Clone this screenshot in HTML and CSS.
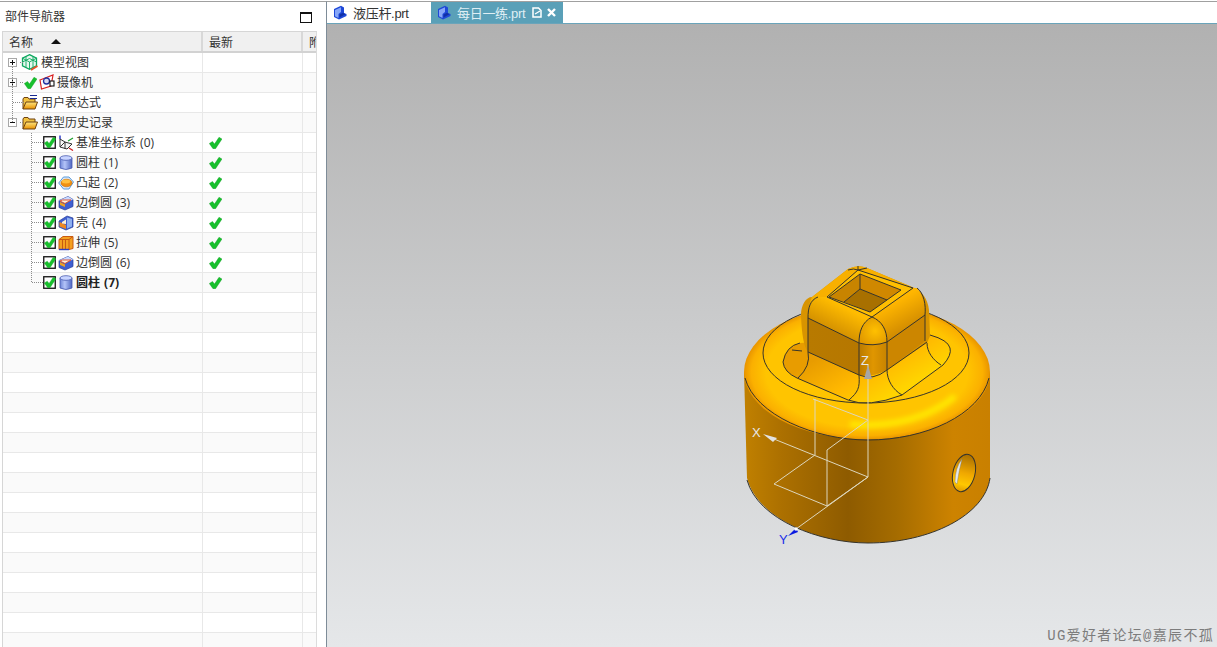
FILE: index.html
```html
<!DOCTYPE html>
<html lang="zh">
<head>
<meta charset="utf-8">
<title>部件导航器</title>
<link rel="stylesheet" href="styles.css">
</head>
<body>
<svg class="defs" width="0" height="0" aria-hidden="true">
  <defs>
    <linearGradient id="folderG" x1="0" y1="0" x2="0" y2="1"><stop offset="0" stop-color="#ffe680"/><stop offset="1" stop-color="#e89000"/></linearGradient>
    <linearGradient id="cylG" x1="0" y1="0" x2="1" y2="0"><stop offset="0" stop-color="#6f86d8"/><stop offset=".4" stop-color="#b4c4f8"/><stop offset="1" stop-color="#4f66c0"/></linearGradient>
    <symbol id="i-check" viewBox="0 0 13 12"><path d="M0.300 6.500L3.500 4.500L5.500 7L10 0.300L13 2L6.500 11.700L4 11.700Z" fill="#17c02c" stroke="#109a24" stroke-width=".4"/></symbol>
    <symbol id="i-view" viewBox="0 0 17 17">
      <path d="M8.500 .7L15.500 4.200V11.800L8.500 15.300L1.500 11.800V4.200Z" fill="#e6f8ee" stroke="#0ea860" stroke-width="1.300"/>
      <path d="M1.500 4.200L8.500 8L15.500 4.200M8.500 8V15.300M5 2.500V13.500M12 2.500V13.500M1.500 8L8.500 4.500L15.500 8" fill="none" stroke="#0ea860" stroke-width=".9"/>
      <path d="M10 16L16.500 12" stroke="#e8502a" stroke-width="1.700"/>
    </symbol>
    <symbol id="i-cam" viewBox="0 0 17 17">
      <path d="M1 6L14 1L12 12L2.500 15Z" fill="#fff" stroke="#d82020" stroke-width="1.200"/>
      <circle cx="7.500" cy="7" r="3" fill="#d8d8f0" stroke="#2030a0" stroke-width="1.300"/>
      <rect x="11" y="7" width="4" height="5" fill="#fff" stroke="#111" stroke-width="1.100"/>
    </symbol>
    <symbol id="i-folder" viewBox="0 0 16 15">
      <path d="M1 14V4L2 2.500H6L7 4H13V7" fill="#f0c040" stroke="#6e4210"/>
      <path d="M1 14L4 7H15.500L13 14Z" fill="url(#folderG)" stroke="#6e4210"/>
    </symbol>
    <symbol id="i-csys" viewBox="0 0 16 16">
      <path d="M2 4L2 12L9 14L14 9L7 7L2 12M2 4L7 7L7 14" fill="#f4f4f4" stroke="#333" stroke-width="1"/>
      <path d="M2 4V0.500" stroke="#1020c0" stroke-width="1.300"/>
      <path d="M10 6L15 3" stroke="#20a030" stroke-width="1.300"/>
      <path d="M11 13L15 15.500" stroke="#d02020" stroke-width="1.300"/>
    </symbol>
    <symbol id="i-cyl" viewBox="0 0 14 16">
      <path d="M1 3V13Q7 16 13 13V3Z" fill="url(#cylG)" stroke="#4a5cb0" stroke-width=".8"/>
      <ellipse cx="7" cy="3" rx="6" ry="2.300" fill="#c8d4ff" stroke="#4a5cb0" stroke-width=".8"/>
    </symbol>
    <symbol id="i-boss" viewBox="0 0 16 14">
      <path d="M.7 7L5.500 1H11L15.500 6L11 13H5.500Z" fill="#d9e8fa" stroke="#5a9ad8"/>
      <ellipse cx="8.500" cy="7" rx="5.500" ry="3.800" fill="#f09010" stroke="#c86800" stroke-width=".6"/>
      <ellipse cx="8" cy="5.500" rx="4.300" ry="1.900" fill="#ffc040"/>
    </symbol>
    <symbol id="i-blend" viewBox="0 0 16 15">
      <path d="M1 5L10 1L15 4V11L7 14.500L1 12Z" fill="#3f5fd0" stroke="#2a3f98" stroke-width=".7"/>
      <path d="M1 5L10 1L15 4L7 7.500Z" fill="#c8d8ff"/>
      <path d="M2 6.500L7 9V11.500L2 9.500Z" fill="#f0a020"/>
      <path d="M2 5.500Q4 4 7 4.500L13 4.500L7 8Z" fill="#f8f0e0" stroke="#e04a20" stroke-width=".9"/>
    </symbol>
    <symbol id="i-shell" viewBox="0 0 16 16">
      <path d="M1 6L9 1L15 3V12L8 15L1 12Z" fill="#3f5fd0" stroke="#2a3f98" stroke-width=".7"/>
      <path d="M9 2.500L14 4V11.500L9 13.500Z" fill="#8fb0f0"/>
      <path d="M1.500 7L8 10V14L1.500 11.500Z" fill="#ee8820"/>
      <path d="M4 7L8 4.500V9L4 8.500Z" fill="#fff0d0"/>
    </symbol>
    <symbol id="i-ext" viewBox="0 0 16 15">
      <path d="M1 4L5 1H15V13L11 14H1Z" fill="#f4a020" stroke="#c85a10"/>
      <path d="M1 4H11V14M4.500 4V14M7.500 4V14M11 4L15 1" fill="none" stroke="#c85a10"/>
      <path d="M1 14H11" stroke="#3040c0" stroke-width="1.400"/>
    </symbol>
    <symbol id="i-part" viewBox="0 0 14 15">
      <path d="M1 4L8 .7L11 2.500V8L13.500 9V11L6 14.500L1 12Z" fill="#1e48d8"/>
      <path d="M2 5L8 2.300V7L5.500 9V13L2 11.300Z" fill="#86a6f8"/>
      <path d="M6.500 9.500L10 7.800L12.500 9.200L6.500 12.500Z" fill="#1030a8"/>
    </symbol>
    <symbol id="i-box" viewBox="0 0 13 13"><rect x=".75" y=".75" width="11.500" height="11.500" fill="#fff" stroke="#111" stroke-width="1.300"/></symbol>
  </defs>
</svg>

<div class="app">
  <aside class="nav">
    <header class="nav-title">
      <span>部件导航器</span>
      <span class="maxbtn"></span>
    </header>
    <div class="table">
      <div class="row head">
        <div class="cell name-head">名称<span class="sort"></span></div>
        <div class="cell">最新</div>
        <div class="cell c3">附</div>
      </div>

      <div class="row"><div class="cell name"><span class="tog plus"></span><svg class="ic top-ic"><use href="#i-view"/></svg><span class="lbl">模型视图</span></div><div class="cell"></div><div class="cell"></div></div>
      <div class="row alt"><div class="cell name"><span class="tog plus"></span><svg class="chk cam-chk"><use href="#i-check"/></svg><svg class="ic cam-ic"><use href="#i-cam"/></svg><span class="lbl">摄像机</span></div><div class="cell"></div><div class="cell"></div></div>
      <div class="row"><div class="cell name"><span class="tog none"></span><span class="fold-wrap"><svg class="ic fold"><use href="#i-folder"/></svg><i class="eq"></i></span><span class="lbl">用户表达式</span></div><div class="cell"></div><div class="cell"></div></div>
      <div class="row alt"><div class="cell name"><span class="tog minus"></span><svg class="ic fold"><use href="#i-folder"/></svg><span class="lbl">模型历史记录</span></div><div class="cell"></div><div class="cell"></div></div>

      <div class="row"><div class="cell name child"><span class="cb"><svg class="box"><use href="#i-box"/></svg><svg class="cbchk"><use href="#i-check"/></svg></span><svg class="fic"><use href="#i-csys"/></svg><span class="lbl">基准坐标系 (0)</span></div><div class="cell st"><svg class="chk"><use href="#i-check"/></svg></div><div class="cell"></div></div>
      <div class="row alt"><div class="cell name child"><span class="cb"><svg class="box"><use href="#i-box"/></svg><svg class="cbchk"><use href="#i-check"/></svg></span><svg class="fic"><use href="#i-cyl"/></svg><span class="lbl">圆柱 (1)</span></div><div class="cell st"><svg class="chk"><use href="#i-check"/></svg></div><div class="cell"></div></div>
      <div class="row"><div class="cell name child"><span class="cb"><svg class="box"><use href="#i-box"/></svg><svg class="cbchk"><use href="#i-check"/></svg></span><svg class="fic"><use href="#i-boss"/></svg><span class="lbl">凸起 (2)</span></div><div class="cell st"><svg class="chk"><use href="#i-check"/></svg></div><div class="cell"></div></div>
      <div class="row alt"><div class="cell name child"><span class="cb"><svg class="box"><use href="#i-box"/></svg><svg class="cbchk"><use href="#i-check"/></svg></span><svg class="fic"><use href="#i-blend"/></svg><span class="lbl">边倒圆 (3)</span></div><div class="cell st"><svg class="chk"><use href="#i-check"/></svg></div><div class="cell"></div></div>
      <div class="row"><div class="cell name child"><span class="cb"><svg class="box"><use href="#i-box"/></svg><svg class="cbchk"><use href="#i-check"/></svg></span><svg class="fic"><use href="#i-shell"/></svg><span class="lbl">壳 (4)</span></div><div class="cell st"><svg class="chk"><use href="#i-check"/></svg></div><div class="cell"></div></div>
      <div class="row alt"><div class="cell name child"><span class="cb"><svg class="box"><use href="#i-box"/></svg><svg class="cbchk"><use href="#i-check"/></svg></span><svg class="fic"><use href="#i-ext"/></svg><span class="lbl">拉伸 (5)</span></div><div class="cell st"><svg class="chk"><use href="#i-check"/></svg></div><div class="cell"></div></div>
      <div class="row"><div class="cell name child"><span class="cb"><svg class="box"><use href="#i-box"/></svg><svg class="cbchk"><use href="#i-check"/></svg></span><svg class="fic"><use href="#i-blend"/></svg><span class="lbl">边倒圆 (6)</span></div><div class="cell st"><svg class="chk"><use href="#i-check"/></svg></div><div class="cell"></div></div>
      <div class="row alt"><div class="cell name child"><span class="cb"><svg class="box"><use href="#i-box"/></svg><svg class="cbchk"><use href="#i-check"/></svg></span><svg class="fic"><use href="#i-cyl"/></svg><span class="lbl bold">圆柱 (7)</span></div><div class="cell st"><svg class="chk"><use href="#i-check"/></svg></div><div class="cell"></div></div>

      <div class="row"><div class="cell"></div><div class="cell"></div><div class="cell"></div></div>
      <div class="row alt"><div class="cell"></div><div class="cell"></div><div class="cell"></div></div>
      <div class="row"><div class="cell"></div><div class="cell"></div><div class="cell"></div></div>
      <div class="row alt"><div class="cell"></div><div class="cell"></div><div class="cell"></div></div>
      <div class="row"><div class="cell"></div><div class="cell"></div><div class="cell"></div></div>
      <div class="row alt"><div class="cell"></div><div class="cell"></div><div class="cell"></div></div>
      <div class="row"><div class="cell"></div><div class="cell"></div><div class="cell"></div></div>
      <div class="row alt"><div class="cell"></div><div class="cell"></div><div class="cell"></div></div>
      <div class="row"><div class="cell"></div><div class="cell"></div><div class="cell"></div></div>
      <div class="row alt"><div class="cell"></div><div class="cell"></div><div class="cell"></div></div>
      <div class="row"><div class="cell"></div><div class="cell"></div><div class="cell"></div></div>
      <div class="row alt"><div class="cell"></div><div class="cell"></div><div class="cell"></div></div>
      <div class="row"><div class="cell"></div><div class="cell"></div><div class="cell"></div></div>
      <div class="row alt"><div class="cell"></div><div class="cell"></div><div class="cell"></div></div>
      <div class="row"><div class="cell"></div><div class="cell"></div><div class="cell"></div></div>
      <div class="row alt"><div class="cell"></div><div class="cell"></div><div class="cell"></div></div>
      <div class="row"><div class="cell"></div><div class="cell"></div><div class="cell"></div></div>
      <div class="row alt"><div class="cell"></div><div class="cell"></div><div class="cell"></div></div>

      <svg class="guides" width="60" height="300" aria-hidden="true">
        <path d="M9.500 35V91M28.500 101V251M17 30.500H20M17 50.500H20M10 70.500H21M17 90.500H20M29 110.500H40M29 130.500H40M29 150.500H40M29 170.500H40M29 190.500H40M29 210.500H40M29 230.500H40M29 250.500H40"/>
      </svg>
    </div>
  </aside>

  <main class="work">
    <nav class="tabs">
      <div class="tab"><svg class="tabic"><use href="#i-part"/></svg><span class="tabtxt">液压杆.prt</span></div>
      <div class="tab active"><svg class="tabic"><use href="#i-part"/></svg><span class="tabtxt">每日一练.prt</span>
        <svg class="tabdoc" viewBox="0 0 10 11"><path d="M1 1H6.500L9 3.500V10H1Z" fill="none" stroke="#fff" stroke-width="1.500"/><path d="M3 7L8 4" stroke="#fff" stroke-width="1.300"/></svg>
        <svg class="tabx" viewBox="0 0 9 9"><path d="M1 1L8 8M8 1L1 8" stroke="#fff" stroke-width="2.400"/></svg>
      </div>
    </nav>
    <div class="viewport">
      <svg class="scene" viewBox="327 24 890 623" width="890" height="623">
        <defs>
          <linearGradient id="bodyG" gradientUnits="userSpaceOnUse" x1="745" y1="0" x2="990" y2="0">
            <stop offset="0" stop-color="#c08000"/><stop offset=".15" stop-color="#ac7000"/><stop offset=".42" stop-color="#8e5b00"/><stop offset=".62" stop-color="#a56c00"/><stop offset=".85" stop-color="#cd8300"/><stop offset="1" stop-color="#c98000"/>
          </linearGradient>
          <radialGradient id="domeG" gradientUnits="userSpaceOnUse" cx="867" cy="372" r="123" gradientTransform="translate(0 167.800) scale(1 .5488)">
            <stop offset="0" stop-color="#ffc400"/><stop offset=".82" stop-color="#ffc400"/><stop offset=".94" stop-color="#fbb000"/><stop offset="1" stop-color="#e89400"/>
          </radialGradient>
          <linearGradient id="baseG" gradientUnits="userSpaceOnUse" x1="840" y1="345" x2="875" y2="405">
            <stop offset="0" stop-color="#e89c00"/><stop offset=".55" stop-color="#ffb800"/><stop offset="1" stop-color="#ffd400"/>
          </linearGradient>
          <linearGradient id="leftWallG" gradientUnits="userSpaceOnUse" x1="808" y1="0" x2="859" y2="0">
            <stop offset="0" stop-color="#b87a00"/><stop offset="1" stop-color="#b67700"/>
          </linearGradient>
          <linearGradient id="cornerG" gradientUnits="userSpaceOnUse" x1="859" y1="0" x2="887" y2="0">
            <stop offset="0" stop-color="#b97a00"/><stop offset=".5" stop-color="#e09600"/><stop offset="1" stop-color="#c88400"/>
          </linearGradient>
          <linearGradient id="bandLG" gradientUnits="userSpaceOnUse" x1="846" y1="308" x2="832" y2="335">
            <stop offset="0" stop-color="#ffbc00"/><stop offset="1" stop-color="#cd8a00"/>
          </linearGradient>
          <linearGradient id="bandRG" gradientUnits="userSpaceOnUse" x1="893" y1="303" x2="908" y2="330">
            <stop offset="0" stop-color="#ffb600"/><stop offset="1" stop-color="#d08a00"/>
          </linearGradient>
          <radialGradient id="ballG" gradientUnits="userSpaceOnUse" cx="875" cy="331" r="17">
            <stop offset="0" stop-color="#ffc000"/><stop offset="1" stop-color="#e09800"/>
          </radialGradient>
          <linearGradient id="holeG" x1="0" y1="0" x2="0" y2="1">
            <stop offset="0" stop-color="#a86e00"/><stop offset=".5" stop-color="#f0a800"/><stop offset=".8" stop-color="#ffc800"/><stop offset="1" stop-color="#e09800"/>
          </linearGradient>
          <filter id="soft" x="-20%" y="-50%" width="140%" height="200%"><feGaussianBlur stdDeviation="2.500"/></filter>
        </defs>

        <path class="fill-body" d="M744 372L747 478C758 520 820 543 868 543C930 543 985 515 990 478L990 372Z"/>
        <path class="edge" d="M747 480C758 520 820 543 868 543C930 543 985 515 990 478"/>
        <ellipse cx="867" cy="372" rx="123" ry="67.500" fill="url(#domeG)"/>
        <path class="glow" d="M850 424Q890 428 925 414Q945 405 955 396" filter="url(#soft)"/>
        <path class="edge" d="M745 378C755 415 815 440 868 440C925 440 980 415 989 378"/>
        <ellipse class="edge" cx="866" cy="353" rx="103" ry="50"/>

        <path fill="url(#baseG)" d="M800 343Q786 346 783 362Q784 372 797 378L848 400Q868 408 902 395L943 365Q952 355 950 348Q948 340 930 335Z"/>
        <path class="edge" d="M800 343Q786 346 783 362Q784 372 797 378L848 400Q868 408 902 395L943 365Q952 355 950 348Q948 340 930 335"/>
        <path class="edge" d="M808 352Q811 366 798 378M859 375C860 388 858 392 849 400M887 370C887 380 893 390 902 395M927 343C927 352 933 360 941 365M792 350L802 351"/>

        <path class="boss-rim" d="M801 315C801 305 806 297 812 297L848 269Q858 264 867 268L912 287Q927 293 929 310L930 336L927 343L887 370Q870 378 859 375L808 352Q802 345 801 315Z"/>
        <path fill="url(#leftWallG)" d="M808 318L859 343V375L808 352Z"/>
        <path fill="url(#cornerG)" d="M859 343Q873 347 887 342V370Q870 378 859 375Z"/>
        <path class="wall-r" d="M887 342L925 315V341L887 370Z"/>
        <path fill="url(#bandLG)" d="M812 297L827 297L872 317Q860 325 859 343L808 318Q808 304 812 297Z"/>
        <path fill="url(#bandRG)" d="M872 317L913 288L917 288Q926 298 925 315L887 342Q887 326 872 317Z"/>
        <path fill="url(#ballG)" d="M872 317Q860 324 859 343Q873 347 887 342Q887 326 872 317Z"/>
        <path class="top-flat" d="M827 297L858 270L913 288L872 317Z"/>
        <path class="top-back" d="M812 297L848 269Q858 264 867 268L912 287L917 289L913 288L858 270L827 297Z"/>
        <path class="hole-l" d="M829 297L860 274V289L844 302Z"/>
        <path class="hole-r" d="M860 274L901 290L887 300L860 289Z"/>
        <path class="hole-f" d="M844 302L860 289L887 300L870 312Z"/>
        <path class="hole-b" d="M829 297L844 302L870 312L829 297Z"/>

        <path class="edge" d="M827 297L858 270L913 288L872 317ZM829 297L860 274L901 290L870 312ZM860 274V289L844 302M860 289L887 300"/>
        <path class="edge" d="M818 297C810 300 808 308 808 318M848 270Q854 268 858 270M858 266V270M867 268L858 270M917 288C924 293 926 305 925 315M872 317C862 322 859 332 859 343M872 317C882 321 887 330 887 342"/>
        <path class="edge" d="M808 318L859 343Q873 347 887 342L925 315M808 318V352M859 343V375M887 342V370M925 315V341M808 352L859 375Q873 381 887 370L927 342"/>

        <ellipse cx="964" cy="473" rx="11" ry="19" transform="rotate(14 964 473)" fill="url(#holeG)" class="hole-out"/>
        <path class="hole-slit" d="M955 482Q955 468 962 459Q959 470 957 484Z"/>

        <path class="axis" d="M813 399L868 420L827 450V506L774 484L815 455V399M868 365V477M769 437L868 477L796 529M827 506L868 477"/>
        <path class="arrow-z" d="M868 365L864 379H872Z"/>
        <path class="arrow-x" d="M763 434L777 438L773 442Z"/>
        <path class="arrow-y" d="M788 536L796 528L798 532Z"/>
        <circle class="dot-y" cx="796" cy="529" r="1.800"/>
        <text class="lab" x="861" y="365">Z</text>
        <text class="lab" x="752" y="437">X</text>
        <text class="lab laby" x="779" y="544">Y</text>
      </svg>
      <div class="mark">UG爱好者论坛@嘉辰不孤</div>
    </div>
  </main>
</div>
</body>
</html>
```

FILE: styles.css
```css
* { box-sizing: border-box; }
html, body { margin: 0; height: 100%; overflow: hidden; background: #fff; }
body { font-family: "Open Sans", "Noto Sans CJK SC", sans-serif; font-size: 12px; color: #333; }
.defs { position: absolute; }

.app { display: flex; width: 1217px; height: 647px; }

.nav {
  width: 327px; flex: none; height: 647px;
  border-top: 1px solid #a0a0a0; margin-top: 1px;
  border-right: 1px solid #7e8c98;
  padding-left: 2px; background: #fff;
  display: flex; flex-direction: column; overflow: hidden;
}
.nav-title {
  height: 29px; flex: none; display: flex; align-items: center; justify-content: space-between;
  padding: 0 14px 0 3px; font-size: 12px; line-height: 29px; color: #333;
}
.maxbtn { width: 12px; height: 11px; border: 1px solid #111; border-top-width: 2px; margin-top: 1px; }

.table {
  position: relative; width: 315px; flex: 1; overflow: hidden;
  border-left: 1px solid #d6d6d6; border-right: 1px solid #dcdcdc; border-top: 1px solid #d6d6d6;
}
.row {
  display: grid; grid-template-columns: 200px 100px 13px; height: 20px;
  border-bottom: 1px solid #e8e8e8; background: #fff;
}
.row.alt { background: #fafafa; }
.cell { border-right: 1px solid #e8e8e8; display: flex; align-items: center; min-width: 0; overflow: hidden; white-space: nowrap; }
.cell:last-child { border-right: 0; }
.head { height: 21px; background: #f0f0f0; border-bottom: 2px solid #d2d2d2; }
.head .cell { padding-left: 6px; border-right: 2px solid #d8d8d8; color: #333; }
.head .c3 { padding-left: 6px; border-right: 0; }
.name-head { position: relative; }
.sort { width: 0; height: 0; margin-left: 18px; border-left: 5px solid transparent; border-right: 5px solid transparent; border-bottom: 5px solid #111; }

.lbl { margin-bottom: 2px; word-spacing: 1px; }
.tog { width: 9px; height: 9px; margin-left: 5px; flex: none; position: relative; }
.tog.plus, .tog.minus { border: 1px solid #a8a8a8; background: #fff; }
.tog.plus::before, .tog.minus::before { content: ""; position: absolute; left: 1px; top: 3px; width: 5px; height: 1px; background: #111; }
.tog.plus::after { content: ""; position: absolute; left: 3px; top: 1px; width: 1px; height: 5px; background: #111; }
.ic { flex: none; }
.top-ic { width: 17px; height: 17px; margin: 0 3px 0 4px; }
.cam-chk { margin-left: 7px; }
.cam-ic { width: 17px; height: 17px; margin: 0 1px 0 2px; }
.fold { width: 16px; height: 15px; margin: 0 3px 0 5px; }
.fold-wrap { position: relative; display: flex; }
.eq { position: absolute; left: 13px; top: 0; width: 7px; height: 4px; border-top: 1px solid #1a2a90; border-bottom: 1px solid #1a2a90; }
.chk { width: 13px; height: 12px; flex: none; }
.child { padding-left: 40px; }
.cb { position: relative; width: 13px; height: 13px; flex: none; margin-right: 2px; }
.box { position: absolute; left: 0; top: 0; width: 13px; height: 13px; }
.cbchk { position: absolute; left: 1px; top: 1px; width: 12px; height: 11px; }
.fic { width: 16px; height: 16px; flex: none; margin-right: 2px; }
.st { padding-left: 6px; }
.bold { font-weight: 700; color: #222; }

.guides { position: absolute; left: 0; top: 0; pointer-events: none; }
.guides path { fill: none; stroke: #8c8c8c; stroke-width: 1; stroke-dasharray: 1 1; }

.work { flex: 1; display: flex; flex-direction: column; min-width: 0; margin-top: 1px; border-top: 1px solid #a0a0a0; }
.tabs {
  height: 22px; flex: none; display: flex; background: #fff;
  padding-left: 1px; border-bottom: 1px solid #6aa4ba;
}
.tab { height: 21px; display: flex; align-items: center; font-family: "Liberation Sans", "Noto Sans CJK SC", sans-serif; font-size: 13px; color: #333; }
.tab:first-child { width: 103px; padding-left: 5px; }
.tab.active { width: 132px; padding-left: 6px; background: #5aa0b8; color: #dfeef4; }
.tabtxt { letter-spacing: -.3px; }
.tabic { width: 14px; height: 15px; margin-right: 6px; flex: none; }
.tabdoc { width: 10px; height: 11px; margin-left: 7px; }
.tabx { width: 9px; height: 9px; margin-left: 5px; }

.viewport {
  position: relative; flex: 1; overflow: hidden;
  background: linear-gradient(#b1b1b1, #e5e7e9);
}
.scene { position: absolute; left: 0; top: 0; display: block; }
.fill-body { fill: url(#bodyG); }
.edge { fill: none; stroke: #36342c; stroke-width: 1; }
.glow { fill: none; stroke: #ffe800; stroke-width: 6; }
.boss-rim { fill: #d89400; }
.wall-r { fill: #cc8600; }
.top-flat { fill: #ffbf00; }
.top-back { fill: #f8b000; }
.hole-l { fill: #c88400; }
.hole-r { fill: #d08800; }
.hole-f { fill: #a87000; }
.hole-b { fill: #c88400; }
.hole-out { stroke: #36342c; stroke-width: 1; }
.hole-slit { fill: #e4e8ec; stroke: #777; stroke-width: .4; }
.axis { fill: none; stroke: #ddd6bc; stroke-width: 1; }
.arrow-z { fill: #a6a6a6; }
.arrow-x { fill: #e2e2e2; }
.arrow-y { fill: #0a1ae0; }
.dot-y { fill: #fff; }
.lab { font-family: "Liberation Sans", sans-serif; font-size: 13px; fill: #e8e8e8; }
.laby { fill: #2030e8; }

.mark {
  position: absolute; right: 3px; bottom: 2px;
  font-family: "Liberation Mono", "Noto Sans CJK SC", monospace; font-size: 14px; line-height: 18px;
  letter-spacing: 1.300px; color: #7c7c7c; white-space: nowrap;
}
```
